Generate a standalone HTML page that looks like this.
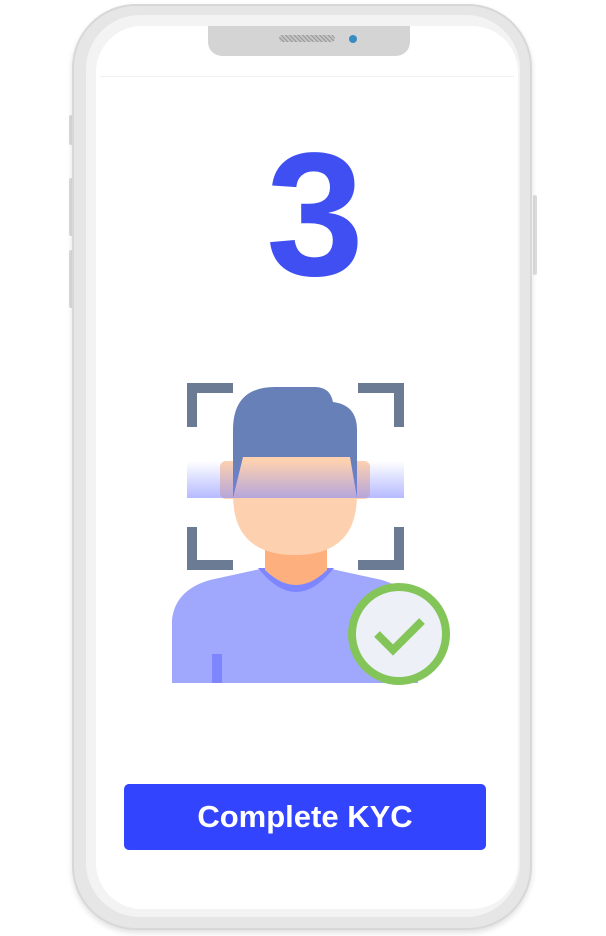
<!DOCTYPE html>
<html><head><style>
html,body{margin:0;padding:0;background:#fff;}
body{width:606px;height:936px;position:relative;overflow:hidden;font-family:"Liberation Sans",sans-serif;}
.phone{position:absolute;left:72px;top:4px;width:460px;height:926px;border-radius:64px;background:#e6e6e6;box-shadow:inset 0 0 0 2px #d8d8d8,0 3px 6px rgba(0,0,0,.12);}
.bezel{position:absolute;left:86px;top:15px;width:434px;height:902px;border-radius:54px;background:#f3f3f3;}
.screen{position:absolute;left:96px;top:26px;width:422px;height:883px;border-radius:46px;background:#fff;}
.notch{position:absolute;left:208px;top:26px;width:202px;height:30px;background:#d4d4d4;border-radius:0 0 14px 14px;}
.spk{position:absolute;left:279px;top:35px;width:56px;height:7px;border-radius:4px;background:repeating-linear-gradient(45deg,#999 0 1px,#c4c4c4 1px 3px);}
.cam{position:absolute;left:349px;top:35px;width:8px;height:8px;border-radius:50%;background:#3a8bc2;}
.btn{position:absolute;left:124px;top:784px;width:362px;height:66px;background:#3344ff;border-radius:5px;color:#fff;font-size:31px;font-weight:bold;text-align:center;line-height:66px;}
.num{position:absolute;left:12px;width:606px;top:127px;text-align:center;font-size:176px;font-weight:bold;color:#3f4ff2;line-height:1;}
.side{position:absolute;background:#dcdcdc;width:4px;border-radius:2px;}
</style></head><body>
<div class="side" style="left:69px;top:115px;height:30px"></div>
<div class="side" style="left:69px;top:178px;height:58px"></div>
<div class="side" style="left:69px;top:250px;height:58px"></div>
<div class="side" style="left:533px;top:195px;height:80px"></div>
<div class="phone"></div>
<div class="bezel"></div>
<div class="screen"></div>
<div style="position:absolute;left:100px;top:76px;width:414px;height:1px;background:#f0f0f0"></div>
<div class="notch"></div><div class="spk"></div><div class="cam"></div>
<div class="num">3</div>
<svg style="position:absolute;left:0;top:0" width="606" height="936">
<defs><linearGradient id="sc" x1="0" y1="0" x2="0" y2="1"><stop offset="0" stop-color="#7a82ff" stop-opacity="0"/><stop offset="1" stop-color="#7a82ff" stop-opacity=".55"/></linearGradient></defs>
<g fill="none" stroke="#6a7b93" stroke-width="10">
<path d="M192 427V388H233"/><path d="M358 388H399V427"/><path d="M192 527V565H233"/><path d="M358 565H399V527"/>
</g>
<path d="M172 683V620Q175 590 210 580L265 568H327L382 580Q415 590 418 620V683Z" fill="#a0a8fd"/>
<rect x="212" y="654" width="10" height="29" fill="#7d85ff"/>
<path d="M258 568Q296 616 334 568Z" fill="#7d85ff"/>
<path d="M265 540H327V570Q296 600 265 570Z" fill="#fdb07e"/>
<rect x="220" y="461" width="20" height="38" rx="6" fill="#fdd1b0"/>
<rect x="350" y="461" width="20" height="38" rx="6" fill="#fdd1b0"/>
<path d="M233 455H357V495Q357 555 295 555Q233 555 233 495Z" fill="#fdd1b0"/>
<path d="M233 498V430Q233 387 275 387H315Q330 387 333 402Q357 405 357 430V498L350 457H243Z" fill="#6780b8"/>
<rect x="187" y="461" width="217" height="37" fill="url(#sc)"/>
<circle cx="399" cy="634" r="47" fill="#edf1f7" stroke="#84c55a" stroke-width="8"/>
<path d="M377 634L393 650L422 621" fill="none" stroke="#84c55a" stroke-width="8"/>
</svg>
<div class="btn">Complete KYC</div>
</body></html>
